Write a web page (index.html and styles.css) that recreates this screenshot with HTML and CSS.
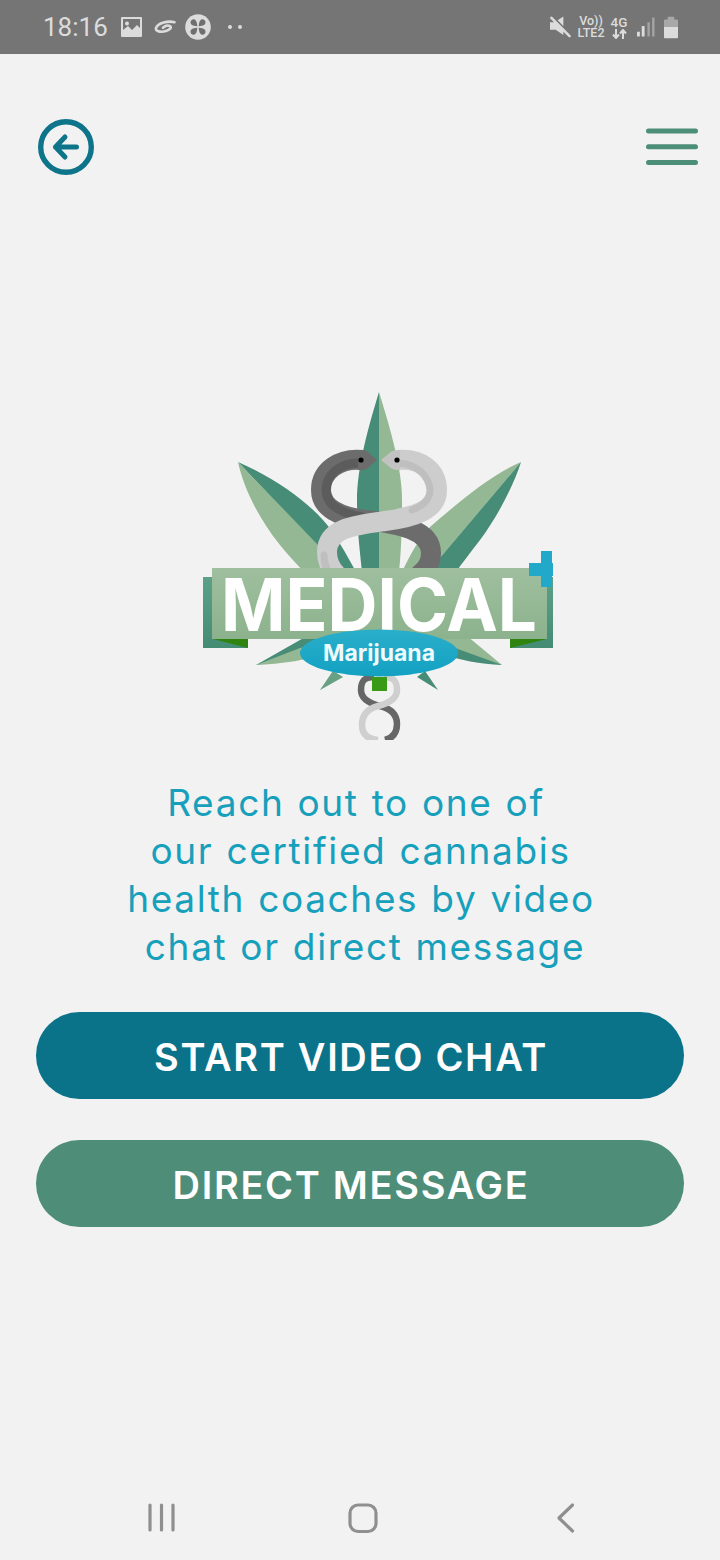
FILE: index.html
```html
<!DOCTYPE html>
<html lang="en">
<head>
<meta charset="utf-8">
<title>Medical Marijuana</title>
<link rel="stylesheet" href="styles.css">
</head>
<body>
<div class="screen">
  <div class="status">
    <div class="status-left">
      <span class="time">18:16</span>
      <svg class="si-image" width="21" height="20" viewBox="0 0 21 20"><path fill="#dcdcdc" fill-rule="evenodd" d="M1 0h19a1 1 0 0 1 1 1v18a1 1 0 0 1-1 1H1a1 1 0 0 1-1-1V1a1 1 0 0 1 1-1zM2 2v11l5-4 4 4 5-5 3 3V2z"/><circle cx="6" cy="6.5" r="2" fill="#dcdcdc"/></svg>
      <svg class="si-swirl" width="22" height="14" viewBox="0 0 22 14"><path fill="none" stroke="#dcdcdc" stroke-width="2.6" stroke-linecap="round" d="M20.500 2.200C14 .5 4 3 2 8c-1 3.500 5 4.500 10 3 4-1.200 6-3.500 4-4.800-2-1.200-5-.2-7 1.500"/></svg>
      <svg class="si-clover" width="26" height="26" viewBox="0 0 26 26"><circle cx="13" cy="13" r="12.800" fill="#dcdcdc"/><g fill="#6f6f6f"><path d="M12.200 12.200C7.500 12 5.500 10.500 5.500 8.300 5.500 6.500 7 5.200 8.500 5.200 10.500 5.200 12.200 7.500 12.200 12.200z"/><path d="M13.800 12.200C18.500 12 20.500 10.500 20.500 8.300 20.500 6.500 19 5.200 17.500 5.200 15.500 5.200 13.800 7.500 13.800 12.200z"/><path d="M12.200 13.800C7.500 14 5.500 15.500 5.500 17.700 5.500 19.500 7 20.800 8.500 20.800 10.500 20.800 12.200 18.500 12.200 13.800z"/><path d="M13.800 13.800C18.500 14 20.500 15.500 20.500 17.700 20.500 19.500 19 20.800 17.500 20.800 15.500 20.800 13.800 18.500 13.800 13.800z"/></g></svg>
      <span class="dots"><i></i><i></i></span>
    </div>
    <div class="status-right">
      <svg width="21" height="22" viewBox="0 0 22 22"><path fill="#dcdcdc" d="M0 6h4l1-1 9 10v4.500L6 14H0zM8 4l6-4v10z"/><path stroke="#dcdcdc" stroke-width="2.600" stroke-linecap="round" d="M1.500 1.500 20.500 20.500"/></svg>
      <div class="stack net"><span>Vo))</span><span>LTE2</span></div>
      <div class="stack lte">
        <span>4G</span>
        <svg width="15" height="10" viewBox="0 0 15 10"><path fill="none" stroke="#dcdcdc" stroke-width="2" d="M4 0v9M1 5.500 4 9l3-3.500M11 10V1M8 4.500 11 1l3 3.500"/></svg>
      </div>
      <svg class="si-signal" width="18" height="20" viewBox="0 0 19 20"><rect x="0" y="15" width="3" height="5" fill="#dcdcdc"/><rect x="5" y="9" width="3" height="11" fill="#dcdcdc"/><rect x="11" y="5" width="2.500" height="15" fill="#a4a4a4"/><rect x="16" y="0" width="2.500" height="20" fill="#a4a4a4"/></svg>
      <svg class="si-battery" width="14" height="23" viewBox="0 0 15 23"><path fill="#a8a8a8" d="M4 0h7v3h3a1 1 0 0 1 1 1v8H0V4a1 1 0 0 1 1-1h3z"/><path fill="#dcdcdc" d="M0 11h15v11a1 1 0 0 1-1 1H1a1 1 0 0 1-1-1z"/></svg>
    </div>
  </div>

  <main class="main">
    <header class="topbar">
      <svg class="back" width="56" height="56" viewBox="0 0 56 56"><circle cx="28" cy="28" r="25.300" fill="none" stroke="#0d7489" stroke-width="5.400"/><path fill="none" stroke="#0d7489" stroke-width="5" stroke-linecap="round" stroke-linejoin="round" d="M17.500 28h21M27 18 17.500 28 27 38"/></svg>
      <svg class="menu" width="52" height="38" viewBox="0 0 52 38"><path stroke="#4d8e78" stroke-width="5" stroke-linecap="round" d="M2.500 3h47M2.500 18.700h47M2.500 34.500h47"/></svg>
    </header>

    <svg class="logo" width="350" height="350" viewBox="203 390 350 350">
      <defs>
        <linearGradient id="ban" x1="0" y1="0" x2="0" y2="1"><stop offset="0" stop-color="#9fbf9e"/><stop offset="1" stop-color="#8cb28d"/></linearGradient>
        <linearGradient id="band" x1="0" y1="0" x2="0" y2="1"><stop offset="0" stop-color="#5da088"/><stop offset="1" stop-color="#458c75"/></linearGradient>
        <linearGradient id="oval" x1="0" y1="0" x2="0" y2="1"><stop offset="0" stop-color="#2aaeca"/><stop offset="1" stop-color="#13a1c2"/></linearGradient>
      </defs>
      <!-- upper leaves -->
      <path fill="#468c76" d="M379 392C368 428 357 468 357 500 357 530 360 552 362 572H379z"/>
      <path fill="#93b893" d="M379 392C390 428 402 468 402 500 402 530 401 552 399 572H379z"/>
      <path fill="#468c76" d="M238 462C275 478 305 500 323 520 335 533 346 554 355 570H340z"/>
      <path fill="#93b893" d="M238 462C243 485 256 515 280 545 288 555 296 563 304 572H344z"/>
      <path fill="#93b893" d="M521 462C490 475 458 503 430 527 418 540 410 555 402 572H428z"/>
      <path fill="#468c76" d="M521 462C512 490 495 520 480 540 470 553 463 562 456 572H428z"/>
      <!-- dark snake -->
      <g fill="none" stroke-linecap="round">
        <path stroke="#6c6c6c" stroke-width="20" d="M362 460C340 458 321 470 321 490 321 508 340 517 365 520 400 524 431 530 431 553 431 562 426 570 420 574"/>
        <path stroke="#5c5c5c" stroke-width="9" d="M360 463C340 462 326 475 326 490 326 505 340 513 362 517"/>
      </g>
      <path fill="#6c6c6c" d="M358 450 366 451 377 460 366 469 358 470z"/>
      <circle cx="361" cy="460" r="2.600" fill="#000"/>
      <!-- light snake -->
      <g fill="none" stroke-linecap="round">
        <path stroke="#cdcdcd" stroke-width="20" d="M398 460C420 458 437 470 437 490 437 510 415 517 385 521 355 525 327 528 327 552 327 560 330 568 336 574"/>
        <path stroke="#bfbfbf" stroke-width="7" d="M398 463C416 464 429 475 430 490 430 500 423 506 412 510M324 555C324 562 326 568 329 572"/>
      </g>
      <path fill="#c2c2c2" d="M400 450 392 451 381 460 392 469 400 470z"/>
      <circle cx="397" cy="460" r="2.600" fill="#000"/>
      <!-- ribbon ends -->
      <rect x="203" y="577" width="45" height="71" fill="url(#band)"/>
      <rect x="510" y="577" width="43" height="71" fill="url(#band)"/>
      <path fill="#2f8410" d="M213 639H248V648z"/>
      <path fill="#2f8410" d="M510 639H547L510 648z"/>
      <!-- lower leaves -->
      <path fill="#468c76" d="M256 665 307 636 340 640 320 655z"/>
      <path fill="#93b893" d="M256 665C280 664 310 660 330 652L340 640 300 648z"/>
      <path fill="#93b893" d="M502 665 467 636 430 640 440 655z"/>
      <path fill="#468c76" d="M502 665C480 664 460 660 440 654L455 648z"/>
      <path fill="#93b893" d="M320 690 333 671 343 677z"/>
      <path fill="#468c76" d="M333 671 343 677 320 690z" opacity=".55"/>
      <path fill="#468c76" d="M438 690 425 671 417 677z"/>
      <!-- lower snake -->
      <g fill="none" stroke-width="6.500">
        <path stroke="#666" d="M374 677C362 677 361 684 361 690 361 698 368 703 380 706 392 709 397 716 397 724 397 732 393 738 385 740"/>
        <path stroke="#cfcfcf" d="M384 677C396 677 397 684 397 690 397 698 390 703 378 706 367 709 362 716 362 725 362 734 367 739 378 740"/>
      </g>
      <!-- banner -->
      <rect x="212" y="568" width="335" height="71" fill="url(#ban)"/>
      <path fill="#22a9c9" d="M541 551H552V563H553V576H552V587H541V576H529V563H541z"/>
      <text class="logo-title" x="221" y="631" textLength="316" lengthAdjust="spacingAndGlyphs">MEDICAL</text>
      <rect x="372" y="677" width="15" height="14" fill="#3a9a15"/>
      <ellipse cx="379" cy="653" rx="79" ry="23.500" fill="url(#oval)"/>
      <text class="logo-sub" x="379" y="661" text-anchor="middle" textLength="112" lengthAdjust="spacingAndGlyphs">Marijuana</text>
    </svg>

    <p class="intro">
      <span class="l l1">Reach out to one of</span>
      <span class="l l2">our certified cannabis</span>
      <span class="l l3">health coaches by video</span>
      <span class="l l4">chat or direct message</span>
    </p>

    <div class="actions">
      <a class="btn btn-video">START VIDEO CHAT</a>
      <a class="btn btn-msg">DIRECT MESSAGE</a>
    </div>
  </main>

  <nav class="navbar">
    <svg width="28" height="30" viewBox="0 0 28 30"><path stroke="#8f8f8f" stroke-width="3.200" stroke-linecap="round" d="M2 2v25M13.500 2v25M25 2v25"/></svg>
    <svg width="30" height="31" viewBox="0 0 30 31"><rect x="2" y="2" width="26" height="26.500" rx="8" fill="none" stroke="#8f8f8f" stroke-width="3.200"/></svg>
    <svg width="18" height="30" viewBox="0 0 18 30"><path fill="none" stroke="#8f8f8f" stroke-width="3.200" stroke-linecap="round" stroke-linejoin="round" d="M15.500 2 2 15 15.500 28"/></svg>
  </nav>
</div>
</body>
</html>
```

FILE: styles.css
```css
* { box-sizing: border-box; }
html, body { margin: 0; padding: 0; }
body { background: #f2f2f2; font-family: Inter, "Open Sans", sans-serif; }

.screen {
  width: 720px;
  height: 1560px;
  display: flex;
  flex-direction: column;
  overflow: hidden;
  background: #f2f2f2;
}

.status {
  height: 54px;
  flex: none;
  background: #757575;
  display: flex;
  justify-content: space-between;
  align-items: center;
  padding: 0 42px 0 43px;
  color: #dcdcdc;
}
.status-left, .status-right { display: flex; align-items: center; }
.time { font-family: Roboto, sans-serif; font-weight: 400; font-size: 26px; line-height: 30px; width: 78px; }
.si-swirl { margin-left: 12px; }
.si-clover { margin-left: 9px; }
.dots { display: flex; gap: 6px; margin-left: 17px; }
.dots i { width: 4px; height: 4px; border-radius: 50%; background: #dcdcdc; display: block; }

.status-right { gap: 0; }
.stack { display: flex; flex-direction: column; align-items: center; font-family: Roboto, sans-serif; font-weight: 500; color: #dcdcdc; }
.net { font-size: 12.500px; line-height: 12px; width: 28px; margin-left: 6px; }
.lte { font-size: 13.500px; line-height: 13px; width: 16px; margin-left: 6px; }
.lte svg { display: block; }
.si-signal { margin-left: 10px; margin-top: -1px; }
.si-battery { margin-left: 9px; }

.main { flex: 1; display: flex; flex-direction: column; }

.topbar {
  display: flex;
  justify-content: space-between;
  align-items: center;
  padding: 65px 22px 0 38px;
}
.back, .menu { display: block; }

.logo { display: block; margin: 215px 0 0 203px; }
.logo-title { font-family: Inter, sans-serif; font-weight: 700; font-size: 73px; fill: #fff; }
.logo-sub { font-family: Inter, sans-serif; font-weight: 700; font-size: 23px; fill: #eefafc; }

.intro {
  margin: 39px 0 0;
  display: flex;
  flex-direction: column;
  align-items: center;
  font-family: Inter, sans-serif;
  font-weight: 400;
  font-size: 37px;
  letter-spacing: 1.650px;
  word-spacing: 1px;
  line-height: 48px;
  color: #17a0bb;
  white-space: nowrap;
}
.l { display: block; }
.l1 { padding-right: 8px; }
.l2 { padding-left: 1px; }
.l3 { padding-left: 2px; }
.l4 { padding-left: 10px; }

.actions { display: flex; flex-direction: column; gap: 41px; margin: 41px 36px 0; }
.btn {
  height: 87px;
  border-radius: 44px;
  display: flex;
  align-items: center;
  justify-content: center;
  padding: 2px 18px 0 0;
  color: #fff;
  font-family: Inter, sans-serif;
  font-weight: 600;
  font-size: 38px;
  letter-spacing: 1.700px;
}
.btn-video { background: #0b7389; }
.btn-msg { background: #4e8e78; }

.navbar {
  margin-top: auto;
  height: 86px;
  flex: none;
  display: flex;
  align-items: flex-start;
  padding: 29px 0 0 148px;
}
.navbar svg:nth-child(2) { margin-left: 172px; }
.navbar svg:nth-child(3) { margin-left: 179px; }
```
